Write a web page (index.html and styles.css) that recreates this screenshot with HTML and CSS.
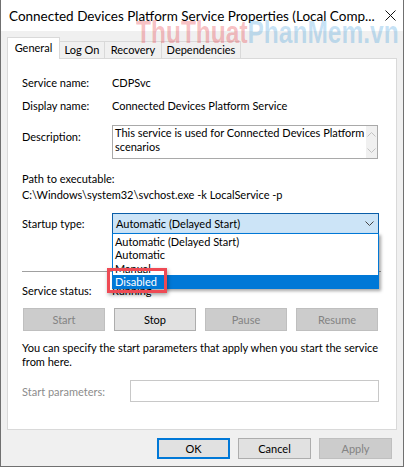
FILE: index.html
```html
<!DOCTYPE html>
<html lang="en-US">
  <head>
    <meta charset="utf-8">
    <meta name="viewport" content="width=device-width">
    <title>Connected Devices Platform Service Properties</title>
    <link rel="stylesheet" href="styles.css">
  </head>

<body>
  <div class="window">
    <div class="titlebar">
      <span class="title">Connected Devices Platform Service Properties (Local Comp...</span>
      <svg class="close" width="11" height="11" viewBox="0 0 11 11">
        <path d="M0.5 0.5L10.5 10.5M10.5 0.5L0.5 10.5" stroke="#111" stroke-width="1" fill="none"/>
      </svg>
    </div>

    <div class="client">
      <div class="tabs">
        <div class="tab active tab-general">General</div>
        <div class="tab tab-logon">Log On</div>
        <div class="tab tab-recovery">Recovery</div>
        <div class="tab tab-deps">Dependencies</div>
      </div>

      <div class="panel">
        <div class="field">
          <span class="field-label">Service name:</span>
          <span>CDPSvc</span>
        </div>
        <div class="field">
          <span class="field-label">Display name:</span>
          <span>Connected Devices Platform Service</span>
        </div>
        <div class="field field-desc">
          <span class="field-label">Description:</span>
          <div class="desc-box">
            <div class="desc-text">This service is used for Connected Devices Platform<br>scenarios</div>
            <div class="scrollbar">
              <span class="arrow">
                <svg width="9" height="5" viewBox="0 0 9 5"><path d="M0.5 4.5L4.5 0.5L8.5 4.5" stroke="#c2c2c2" fill="none"/></svg>
              </span>
              <span class="arrow">
                <svg width="9" height="5" viewBox="0 0 9 5"><path d="M0.5 0.5L4.5 4.5L8.5 0.5" stroke="#c2c2c2" fill="none"/></svg>
              </span>
            </div>
          </div>
        </div>

        <div class="path">
          <div>Path to executable:</div>
          <div>C:\Windows\system32\svchost.exe -k LocalService -p</div>
        </div>

        <div class="field field-startup">
          <span class="field-label">Startup type:</span>
          <div class="combo">
            <span class="combo-value">Automatic (Delayed Start)</span>
            <svg width="9" height="5" viewBox="0 0 9 5"><path d="M0.5 0.5L4.5 4.5L8.5 0.5" stroke="#444" fill="none"/></svg>
            <ul class="dropdown">
              <li>Automatic (Delayed Start)</li>
              <li>Automatic</li>
              <li>Manual</li>
              <li class="selected">Disabled</li>
            </ul>
          </div>
        </div>

        <div class="separator"></div>

        <div class="field field-status">
          <span class="field-label">Service status:</span>
          <span>Running</span>
        </div>

        <div class="service-buttons">
          <button class="btn btn-service" disabled>Start</button>
          <button class="btn btn-service">Stop</button>
          <button class="btn btn-service" disabled>Pause</button>
          <button class="btn btn-service" disabled>Resume</button>
        </div>

        <p class="hint">You can specify the start parameters that apply when you start the service<br>from here.</p>

        <div class="field field-params">
          <span class="field-label params-label">Start parameters:</span>
          <div class="params-input"></div>
        </div>
      </div>

      <div class="actions">
        <button class="btn btn-dialog btn-default">OK</button>
        <button class="btn btn-dialog">Cancel</button>
        <button class="btn btn-dialog" disabled>Apply</button>
      </div>
    </div>

    <div class="highlight"></div>
    <div class="watermark"><span class="wm-red">ThuThuat</span><span class="wm-blue">PhanMem.vn</span></div>
  </div>
</body>

</html>
```

FILE: styles.css
```css
body {
  margin: 0;
  background: #fff;
  font-family: Lato, "Liberation Sans", sans-serif;
  font-size: 11px;
  color: #000;
}

.window {
  position: relative;
  width: 404px;
  height: 467px;
  box-sizing: border-box;
  border: 1px solid #707070;
  border-top: none;
  background: #f0f0f0;
  display: flex;
  flex-direction: column;
  overflow: hidden;
}

.titlebar {
  height: 31px;
  flex-shrink: 0;
  background: #fff;
  display: flex;
  align-items: center;
  padding: 0 7px 0 8px;
}

.title {
  flex: 1;
  font-size: 13.5px;
  padding-top: 1px;
  white-space: nowrap;
}

.client {
  flex: 1;
  display: flex;
  flex-direction: column;
  padding: 6px 6px 0;
}

/* tabs */
.tabs {
  display: flex;
  align-items: flex-end;
  height: 22px;
  margin-bottom: -1px;
  position: relative;
  z-index: 1;
}

.tab {
  height: 18px;
  box-sizing: border-box;
  border: 1px solid #d9d9d9;
  background: #f0f0f0;
  margin-left: -1px;
  text-align: center;
  line-height: 16px;
}

.tab.active {
  height: 22px;
  margin-left: 0;
  background: #fff;
  border-bottom: none;
  line-height: 19px;
}

.tab-general { width: 53px; }
.tab-logon { width: 46px; }
.tab-recovery { width: 58px; }
.tab-deps { width: 80px; }

.panel {
  height: 372px;
  box-sizing: border-box;
  background: #fff;
  border: 1px solid #d9d9d9;
  padding: 12px 15px 0 14px;
}

.field {
  display: flex;
  align-items: center;
  height: 23px;
  white-space: nowrap;
}

.field-label {
  width: 90px;
  flex-shrink: 0;
}

.field-desc {
  margin-top: 8px;
  height: 34px;
  align-items: flex-start;
}

.field-desc .field-label {
  padding-top: 4px;
  line-height: 16px;
}

.desc-box {
  width: 266px;
  height: 34px;
  box-sizing: border-box;
  border: 1px solid #a9a9a9;
  display: flex;
}

.desc-text {
  flex: 1;
  padding: 0 2px;
  line-height: 14px;
}

.scrollbar {
  width: 16px;
  background: #f0f0f0;
  display: flex;
  flex-direction: column;
}

.arrow {
  height: 16px;
  display: flex;
  align-items: center;
  justify-content: center;
}

.path {
  margin-top: 12px;
  line-height: 16px;
}

.field-startup {
  margin-top: 10px;
  height: 21px;
}

.combo {
  position: relative;
  width: 267px;
  height: 21px;
  box-sizing: border-box;
  border: 1px solid #0a5ea8;
  background: #cce4f7;
  display: flex;
  align-items: center;
  padding: 0 4px 0 3px;
}

.combo-value {
  flex: 1;
}

.dropdown {
  position: absolute;
  left: -1px;
  top: 19px;
  width: 267px;
  box-sizing: border-box;
  margin: 0;
  padding: 1px 0 0;
  list-style: none;
  background: #fff;
  border: 1px solid #0078d7;
  box-shadow: 2px 2px 3px rgba(0, 0, 0, 0.35);
  z-index: 2;
}

.dropdown li {
  height: 13.25px;
  line-height: 13.25px;
  padding-left: 2px;
}

.dropdown li.selected {
  background: #0078d7;
  color: #fff;
}

.separator {
  margin-top: 37px;
  border-top: 1px solid #a0a0a0;
}

.field-status {
  margin-top: 10px;
  height: 16px;
}

.service-buttons {
  margin-top: 10px;
  width: 355px;
  padding-left: 1px;
  display: flex;
  justify-content: space-between;
}

.btn {
  font-family: inherit;
  font-size: 100%;
  margin: 0;
  padding: 0;
  box-sizing: border-box;
  border: 1px solid #adadad;
  background: #e1e1e1;
  color: #000;
}

.btn:disabled {
  background: #cccccc;
  border-color: #bfbfbf;
  color: #838383;
}

.btn-service {
  width: 82px;
  height: 23px;
}

.hint {
  margin: 10px 0 0;
  line-height: 14px;
  white-space: nowrap;
}

.field-params {
  margin-top: 11px;
  height: 22px;
}

.params-label {
  width: 108px;
  color: #8c8c8c;
}

.params-input {
  width: 249px;
  height: 22px;
  box-sizing: border-box;
  border: 1px solid #c8c8c8;
  background: #fff;
}

.actions {
  display: flex;
  justify-content: flex-end;
  gap: 8px;
  padding: 8px 5px 0 0;
}

.btn-dialog {
  width: 73px;
  height: 21px;
}

.btn-default {
  border: 2px solid #0078d7;
}

/* annotation over the dropdown */
.highlight {
  position: absolute;
  left: 106px;
  top: 268px;
  width: 60px;
  height: 25px;
  box-sizing: border-box;
  border: 3px solid #ee4a54;
  box-shadow: 1px 2px 4px rgba(0, 0, 0, 0.35);
  z-index: 3;
}

.watermark {
  position: absolute;
  left: 135px;
  top: 17px;
  font-family: "Liberation Sans", sans-serif;
  font-weight: bold;
  font-size: 31px;
  line-height: 31px;
  white-space: nowrap;
  transform: scaleX(0.79);
  transform-origin: 0 0;
  pointer-events: none;
  z-index: 4;
}

.wm-red {
  color: rgba(230, 40, 50, 0.3);
}

.wm-blue {
  color: rgba(30, 140, 215, 0.26);
}
```
